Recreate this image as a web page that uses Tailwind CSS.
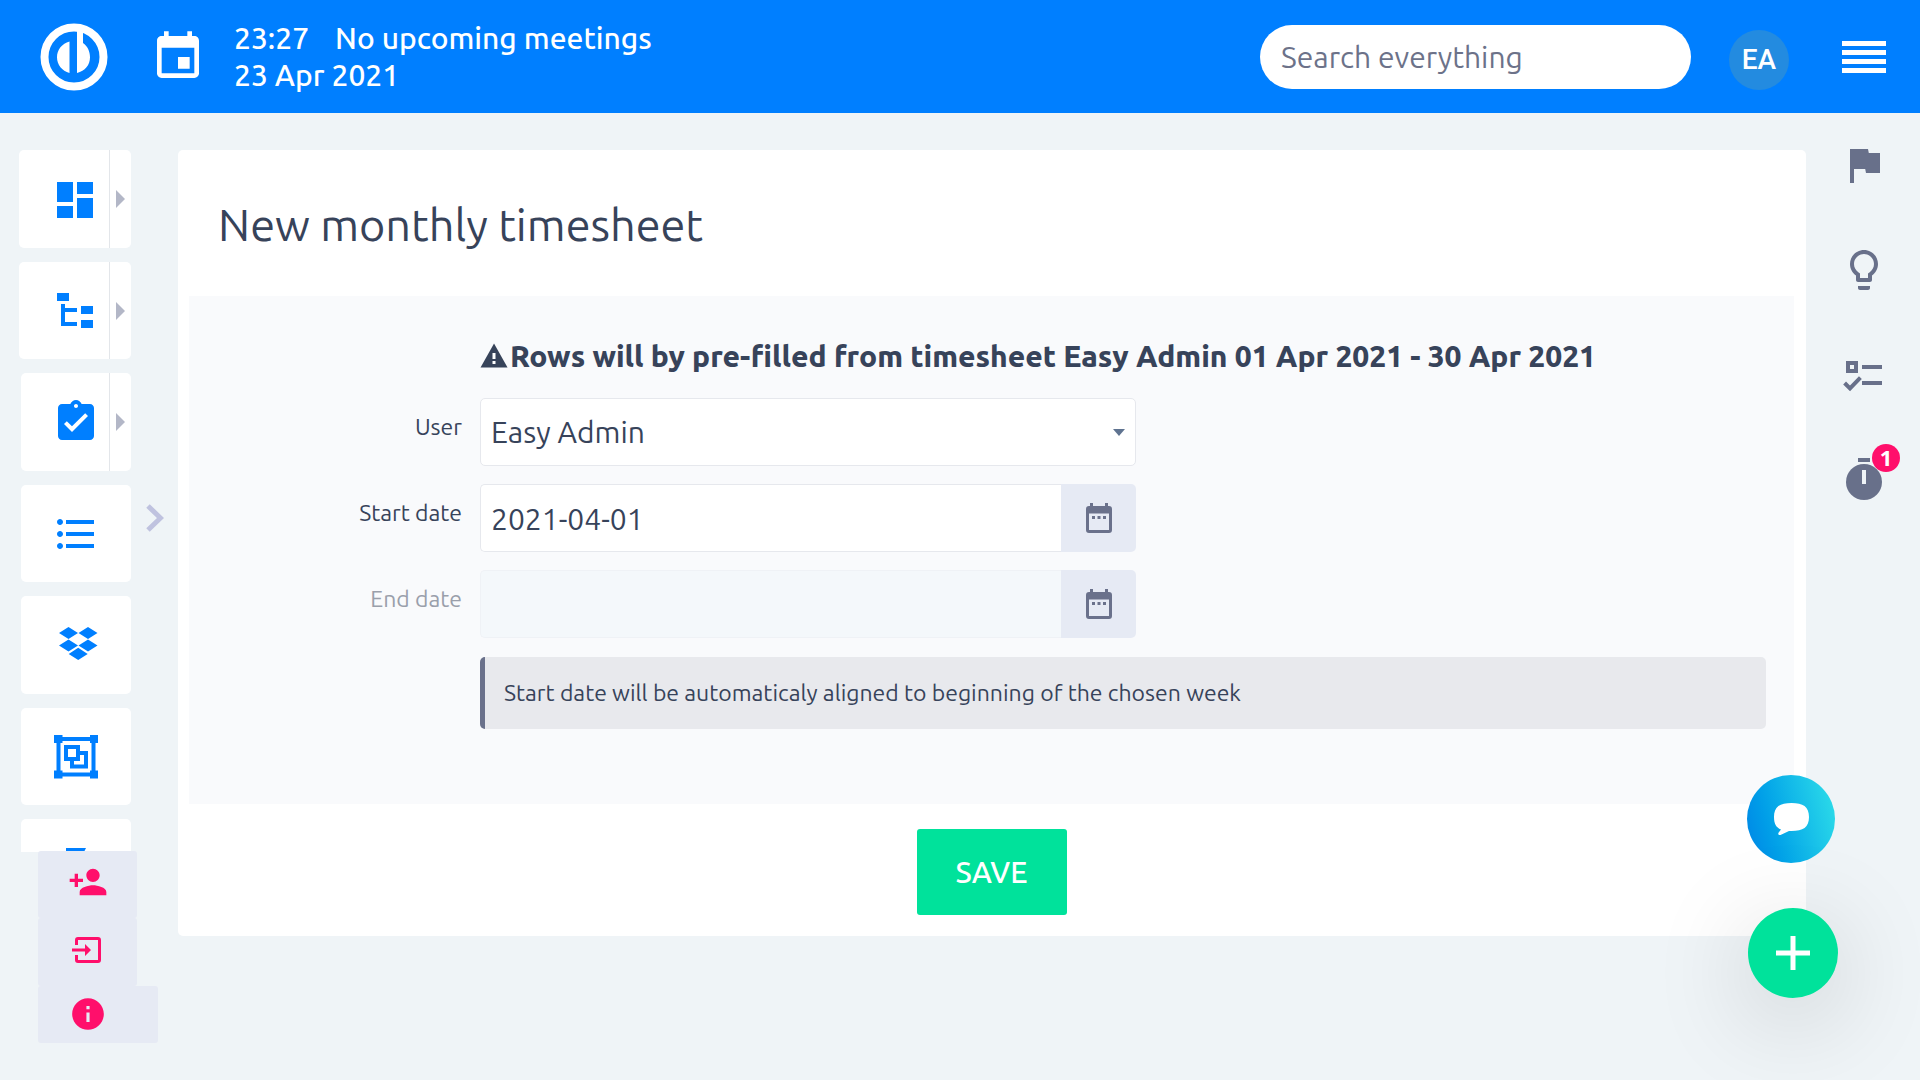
<!DOCTYPE html>
<html lang="en">
<head>
    <meta charset="UTF-8">
    <meta name="viewport" content="width=device-width, initial-scale=1.0">
    <title>New monthly timesheet</title>
    <script src="https://cdn.jsdelivr.net/npm/@tailwindcss/browser@4"></script>
</head>
<body class="min-h-screen bg-[#eff4f7] font-['Ubuntu','Noto_Sans',sans-serif] text-[#37435a]">

    <!-- Top bar -->
    <header class="flex h-[113px] items-center bg-[#007fff] pl-10 pr-[34px] text-white">
        <a href="#" aria-label="Home">
            <svg class="size-[68px]" viewBox="0 0 68 68">
                <circle cx="34" cy="34" r="29.5" fill="none" stroke="#fff" stroke-width="8"/>
                <path fill="#fff" d="M29.500 18.500v31.500C22 48 17 41.500 17 34.200s5-13.700 12.500-15.700zM37 8h6v12c4.500 3 7 8.500 7 14.200C50 42 45 48 37 50z"/>
            </svg>
        </a>
        <a href="#" class="ml-[42px]" aria-label="Calendar">
            <svg class="size-14" viewBox="0 0 24 24" fill="#fff"><path d="M17 12h-5v5h5v-5zM16 1v2H8V1H6v2H5c-1.110 0-1.990.9-1.990 2L3 19c0 1.100.89 2 2 2h14c1.100 0 2-.9 2-2V5c0-1.100-.9-2-2-2h-1V1h-2zm3 18H5V8h14v11z"/></svg>
        </a>
        <div class="ml-7 text-[30px] font-medium leading-[37px]">
            <p><span>23:27</span><a href="#" class="ml-[26px]">No upcoming meetings</a></p>
            <p>23 Apr 2021</p>
        </div>
        <input type="search" aria-label="Search" placeholder="Search everything" class="ml-auto h-16 w-[431px] rounded-full bg-white px-[21px] text-[30px] leading-[44px] text-[#37435a] placeholder:text-[#6c7289]">
        <a href="#" class="ml-[38px] mt-[6px] flex size-[60px] items-center justify-center rounded-full bg-[#238be0] font-['Roboto',sans-serif] text-[28px] font-medium">EA</a>
        <button class="ml-[53px] flex w-11 flex-col gap-1" aria-label="Menu">
            <span class="h-[5px] w-full bg-white"></span>
            <span class="h-[5px] w-full bg-white"></span>
            <span class="h-[5px] w-full bg-white"></span>
            <span class="h-[5px] w-full bg-white"></span>
        </button>
    </header>

    <div class="flex items-start pt-[37px]">

        <!-- Left menu -->
        <aside class="w-[178px] shrink-0">
            <div class="flex">
                <nav class="flex h-[calc(100vh-378px)] w-[131px] flex-col items-end gap-[14px] overflow-hidden text-[#007fff]">
                    <div class="flex h-[98px] w-28 shrink-0 rounded-[5px] bg-white">
                        <a href="#" class="flex w-[91px] items-center border-r border-[#e3e6ea] pl-8 pt-[2px]" aria-label="Dashboard">
                            <svg class="size-12 shrink-0" viewBox="0 0 24 24" fill="currentColor"><path d="M3 13h8V3H3v10zm0 8h8v-6H3v6zm10 0h8V11h-8v10zm0-18v6h8V3h-8z"/></svg>
                        </a>
                        <button class="flex flex-1 items-center justify-center" aria-label="Open dashboard menu"><svg class="h-[18px] w-[9px]" viewBox="0 0 9 18"><path fill="#b3b7c7" d="M0 0l9 9-9 9z"/></svg></button>
                    </div>
                    <div class="flex h-[97px] w-28 shrink-0 rounded-[5px] bg-white">
                        <a href="#" class="flex w-[91px] items-center border-r border-[#e3e6ea] pl-8" aria-label="Projects">
                            <svg class="size-12 shrink-0" viewBox="0 0 24 24" fill="currentColor"><path d="M3 3h6v4H3zM15 9.500h6v4h-6zM15 16.500h6v4h-6zM5 8.500h2v2h6v2H7v5h6v2H5z"/></svg>
                        </a>
                        <button class="flex flex-1 items-center justify-center" aria-label="Open projects menu"><svg class="h-[18px] w-[9px]" viewBox="0 0 9 18"><path fill="#b3b7c7" d="M0 0l9 9-9 9z"/></svg></button>
                    </div>
                    <div class="flex h-[98px] w-[110px] shrink-0 rounded-[5px] bg-white">
                        <a href="#" class="flex w-[89px] items-center border-r border-[#e3e6ea] pl-[31px]" aria-label="Tasks">
                            <svg class="size-12 shrink-0" viewBox="0 0 24 24" fill="currentColor"><path d="M19 3h-4.180C14.400 1.840 13.300 1 12 1c-1.300 0-2.400.84-2.820 2H5c-1.100 0-2 .9-2 2v14c0 1.100.9 2 2 2h14c1.100 0 2-.9 2-2V5c0-1.100-.9-2-2-2zm-7 0c.55 0 1 .45 1 1s-.45 1-1 1-1-.45-1-1 .45-1 1-1zm-2 14l-4-4 1.410-1.410L10 14.170l6.590-6.590L18 9l-8 8z"/></svg>
                        </a>
                        <button class="flex flex-1 items-center justify-center" aria-label="Open tasks menu"><svg class="h-[18px] w-[9px]" viewBox="0 0 9 18"><path fill="#b3b7c7" d="M0 0l9 9-9 9z"/></svg></button>
                    </div>
                    <a href="#" class="flex h-[97px] w-[110px] shrink-0 items-center justify-center rounded-[5px] bg-white" aria-label="Lists">
                        <svg class="size-12" viewBox="0 0 24 24" fill="currentColor"><path d="M4 10.500c-.83 0-1.500.67-1.500 1.500s.67 1.500 1.500 1.500 1.500-.67 1.500-1.500-.67-1.500-1.500-1.500zm0-6c-.83 0-1.500.67-1.500 1.500S3.170 7.500 4 7.500 5.500 6.830 5.500 6 4.830 4.500 4 4.500zm0 12c-.83 0-1.500.67-1.500 1.500s.67 1.500 1.500 1.500 1.500-.67 1.500-1.500-.67-1.500-1.500-1.500zM7 19h14v-2H7v2zm0-6h14v-2H7v2zm0-8v2h14V5H7z"/></svg>
                    </a>
                    <a href="#" class="flex h-[98px] w-[110px] shrink-0 items-center justify-center rounded-[5px] bg-white" aria-label="Files">
                        <svg class="size-12" viewBox="0 0 48 48" fill="currentColor"><path d="M16.500 6l9.500 6-9.500 6-9.500-6zM36 6l9.500 6-9.500 6-9.500-6zM16.500 18.500l9.500 6-9.500 6-9.500-6zM36 18.500l9.500 6-9.500 6-9.500-6zM26.200 26.800l9.500 6.100-9.500 6.100-9.500-6.100z"/></svg>
                    </a>
                    <a href="#" class="flex h-[97px] w-[110px] shrink-0 items-center justify-center rounded-[5px] bg-white" aria-label="Groups">
                        <svg class="size-12" viewBox="0 0 48 48" fill="none" stroke="currentColor" stroke-width="4">
                            <path d="M6.500 6h35v35.500h-35zM14 14h12v12H14zM26 20h8v13.500H20V26"/>
                            <path fill="currentColor" stroke="none" d="M2 2h8.500v8H2zM38 2h8v8h-8zM2 37.500h8.500v8H2zM38 37.500h8v8h-8z"/>
                        </svg>
                    </a>
                    <a href="#" class="flex h-[98px] w-[110px] shrink-0 items-center justify-center rounded-[5px] bg-white" aria-label="More">
                        <svg class="size-12" viewBox="0 0 48 48" fill="currentColor"><path d="M14 4h20l-7 14 7 14H14z"/></svg>
                    </a>
                </nav>
                <button class="ml-[15px] mt-[354px] h-7 w-[18px]" aria-label="Expand menu">
                    <svg class="h-7 w-[18px]" viewBox="0 0 18 28" fill="none" stroke="#bfc2df" stroke-width="5"><path d="M2 2l12.500 12L2 26"/></svg>
                </button>
            </div>
            <div class="relative ml-[38px] -mt-px flex flex-col text-[#ff0f6b]">
                <a href="#" class="h-[67px] w-[99px] rounded-[3px] bg-[#e6eaf4] pl-[30px] pt-[11px]" aria-label="Invite user">
                    <svg class="size-10" viewBox="0 0 24 24" fill="currentColor"><path d="M15 12c2.210 0 4-1.790 4-4s-1.790-4-4-4-4 1.790-4 4 1.790 4 4 4zm-9-2V7H4v3H1v2h3v3h2v-3h3v-2H6zm9 4c-2.670 0-8 1.340-8 4v2h16v-2c0-2.660-5.330-4-8-4z"/></svg>
                </a>
                <a href="#" class="h-[68px] w-[99px] rounded-[3px] bg-[#e6eaf4] pl-[30px] pt-3" aria-label="Log out">
                    <svg class="size-10" viewBox="0 0 40 40">
                        <path fill="none" stroke="currentColor" stroke-width="3" d="M8.500 15v-5a1.500 1.500 0 0 1 1.500-1.500h20a1.500 1.500 0 0 1 1.500 1.500v20a1.500 1.500 0 0 1-1.500 1.500H10A1.500 1.500 0 0 1 8.500 30v-5"/>
                        <path fill="currentColor" d="M4 18.500h13V14l6 6-6 6v-4.500H4z"/>
                    </svg>
                </a>
                <a href="#" class="h-[57px] w-[120px] rounded-[3px] bg-[#e6eaf4] pl-[31px] pt-[9px]" aria-label="About">
                    <svg class="size-[38px]" viewBox="0 0 24 24" fill="currentColor"><path d="M12 2C6.480 2 2 6.480 2 12s4.480 10 10 10 10-4.480 10-10S17.520 2 12 2zm1 15h-2v-6h2v6zm0-8h-2V7h2v2z"/></svg>
                </a>
            </div>
        </aside>

        <!-- Timesheet form -->
        <main class="min-w-0 flex-1 rounded-[5px] bg-white pb-[21px] pl-[11px] pr-3">
            <h1 class="px-[29px] pb-[41px] pt-[45px] text-[45px] leading-[60px]">New monthly timesheet</h1>
            <form>
                <div class="flex h-[508px] flex-col bg-[#f9fafc] pl-[291px] pr-7 pt-[38px]">
                    <p class="flex items-center text-[30px] font-extrabold leading-[44px]">
                        <svg class="mr-[2px] size-7 shrink-0" viewBox="0 0 28 28"><path fill="currentColor" d="M14 1.500l13.500 24H.5z"/><path fill="#fff" d="M12.500 11h3v6h-3zM12.500 19h3v3h-3z"/></svg>
                        Rows will by pre-filled from timesheet Easy Admin 01 Apr 2021 - 30 Apr 2021
                    </p>
                    <div class="-ml-[291px] mt-5 grid grid-cols-[273px_656px] gap-x-[18px] gap-y-[18px] text-[30px]">
                        <label for="user" class="pt-[13px] text-right text-[23px] leading-[32px]">User</label>
                        <div class="relative">
                            <select id="user" class="h-[68px] w-full appearance-none rounded-[5px] border border-[#e6e8ed] bg-white px-[10px]">
                                <option>Easy Admin</option>
                            </select>
                            <svg class="pointer-events-none absolute right-[11px] top-[31px] h-[7px] w-3" viewBox="0 0 12 7"><path fill="#5f7390" d="M0 0h12L6 7z"/></svg>
                        </div>

                        <label for="start" class="pt-[13px] text-right text-[23px] leading-[32px]">Start date</label>
                        <div class="flex h-[68px]">
                            <input id="start" type="text" value="2021-04-01" class="min-w-0 flex-1 rounded-l-[5px] border border-r-0 border-[#e6e8ed] bg-white px-[10px] pt-[2px]">
                            <button type="button" class="flex w-[75px] items-center justify-center rounded-r-[5px] bg-[#e6eaf4] text-[#6a718b]" aria-label="Pick start date">
                                <svg class="h-[30px] w-[26px]" viewBox="0 0 26 30" fill="currentColor"><path fill-rule="evenodd" d="M4 0h3v3h12V0h3v3h1a3 3 0 0 1 3 3v21a3 3 0 0 1-3 3H3a3 3 0 0 1-3-3V6a3 3 0 0 1 3-3h1zM3 10.500V27h20V10.500z"/><path d="M6 13h3v3H6zM11.500 13h3v3h-3zM17 13h3v3h-3z"/></svg>
                            </button>
                        </div>

                        <label for="end" class="pt-[13px] text-right text-[23px] leading-[32px] text-[#9a9fab]">End date</label>
                        <div class="flex h-[68px]">
                            <input id="end" type="text" disabled class="min-w-0 flex-1 rounded-l-[5px] border border-r-0 border-[#eff2f6] bg-[#f4f8fb] px-[10px] pt-[2px]">
                            <button type="button" class="flex w-[75px] items-center justify-center rounded-r-[5px] bg-[#e6eaf4] text-[#6a718b]" aria-label="Pick end date">
                                <svg class="h-[30px] w-[26px]" viewBox="0 0 26 30" fill="currentColor"><path fill-rule="evenodd" d="M4 0h3v3h12V0h3v3h1a3 3 0 0 1 3 3v21a3 3 0 0 1-3 3H3a3 3 0 0 1-3-3V6a3 3 0 0 1 3-3h1zM3 10.500V27h20V10.500z"/><path d="M6 13h3v3H6zM11.500 13h3v3h-3zM17 13h3v3h-3z"/></svg>
                            </button>
                        </div>
                    </div>
                    <p class="mt-[19px] rounded-[5px] border-l-[5px] border-[#6a718b] bg-[#e8e9ed] px-[19px] py-5 text-[23px] leading-[32px]">Start date will be automaticaly aligned to beginning of the chosen week</p>
                </div>
                <div class="mt-[25px] flex justify-center">
                    <button type="submit" class="h-[86px] w-[150px] rounded-[3px] bg-[#00e29b] text-[30px] font-medium text-white">SAVE</button>
                </div>
            </form>
        </main>

        <!-- Right toolbar -->
        <aside class="-mt-[9px] flex w-[114px] shrink-0 flex-col items-center gap-[57px] pl-[2px] text-[#68708a]">
            <a href="#" aria-label="Milestones"><svg class="size-12" viewBox="0 0 24 24" fill="currentColor"><path d="M14.400 6L14 4H5v17h2v-7h5.600l.4 2h7V6z"/></svg></a>
            <a href="#" aria-label="Ideas"><svg class="size-12" viewBox="0 0 24 24" fill="currentColor"><path d="M9 21c0 .55.45 1 1 1h4c.55 0 1-.45 1-1v-1H9v1zm3-19C8.140 2 5 5.140 5 9c0 2.380 1.190 4.470 3 5.740V17c0 .55.45 1 1 1h6c.55 0 1-.45 1-1v-2.260c1.810-1.270 3-3.360 3-5.740 0-3.860-3.140-7-7-7zm2.850 11.100l-.85.6V16h-4v-2.300l-.85-.6C7.800 12.160 7 10.630 7 9c0-2.760 2.240-5 5-5s5 2.240 5 5c0 1.630-.8 3.160-2.150 4.100z"/></svg></a>
            <a href="#" aria-label="To-do list"><svg class="size-12" viewBox="0 0 24 24" fill="none" stroke="currentColor" stroke-width="2"><path d="M4 6h4v4H4zM11 8h10M11 16h10M2.300 16L5 18.700l5.200-5.400"/></svg></a>
            <a href="#" class="relative" aria-label="Timers">
                <svg class="size-12" viewBox="0 0 24 24"><path fill="currentColor" d="M9 1h6v2H9z"/><circle cx="12" cy="13" r="9" fill="currentColor"/><path fill="#eff4f7" d="M11 7h2v7h-2z"/></svg>
                <span class="absolute -right-[12px] -top-[12px] flex size-7 items-center justify-center rounded-full bg-[#ff0f6b] pb-[3px] font-['Open_Sans',sans-serif] text-[22px] font-bold leading-none text-white">1</span>
            </a>
        </aside>
    </div>

    <!-- Floating buttons -->
    <div class="fixed bottom-[82px] right-[82px] flex flex-col items-end gap-[45px]">
        <button class="mr-[3px] flex size-[88px] items-center justify-center rounded-full bg-linear-75 from-[#0084e6] to-[#2fe0e8]" aria-label="Chat">
            <svg class="h-8 w-[35px]" viewBox="0 0 35 32"><path fill="#fff" d="M17.500 0C29 0 35 3.500 35 14s-6 14-17.500 14h-2.500L6.500 32c-2 .6-2.600-1-2-2.200L7 26.500C2 24.500 0 20.500 0 14 0 3.500 6 0 17.500 0z"/></svg>
        </button>
        <button class="flex size-[90px] items-center justify-center rounded-full bg-[#00e29b] shadow-[0_20px_100px_rgba(0,0,0,0.18)]" aria-label="Add">
            <svg class="size-[34px]" viewBox="0 0 34 34" stroke="#fff" stroke-width="5"><path d="M17 0v34M0 17h34"/></svg>
        </button>
    </div>
</body>
</html>
